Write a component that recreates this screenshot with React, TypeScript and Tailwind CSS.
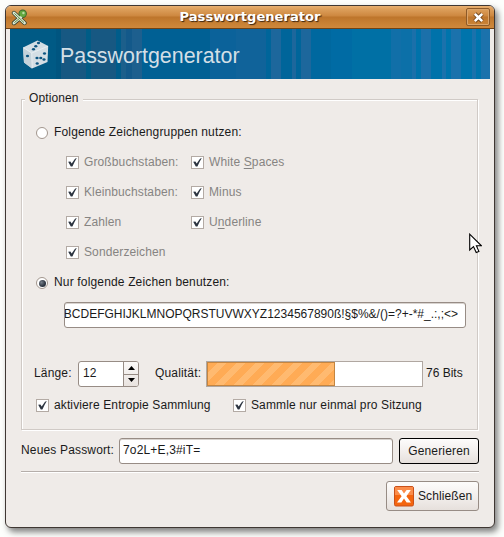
import React from "react";

const stripes: [number, number, string][] = [
  [0, 46, "#005a85"], [46, 5, "#005580"], [51, 25, "#175882"], [76, 5, "#005c86"], [81, 25, "#175882"],
  [106, 5, "#005c8a"], [111, 5, "#1c5f8b"], [116, 6, "#13598a"], [122, 10, "#1d5f8e"], [132, 68, "#006094"],
  [200, 26, "#0b629a"], [226, 30, "#10639a"], [256, 5, "#00659a"], [261, 10, "#1d679c"],
  [271, 11, "#00659a"], [282, 4, "#1d679c"], [286, 5, "#00659a"], [291, 10, "#1d679c"],
  [301, 20, "#00689f"], [321, 21, "#006ba4"], [342, 39, "#0070a5"], [381, 10, "#116fa8"],
  [391, 11, "#0c70a8"], [402, 4, "#1b70aa"], [406, 5, "#0072aa"], [411, 10, "#1b70aa"], [421, 11, "#0072aa"],
  [432, 4, "#1b72ac"], [436, 5, "#0074ac"], [441, 10, "#1b72ac"], [451, 11, "#0074ac"],
  [462, 4, "#1b72ac"], [466, 5, "#0074ac"], [471, 9, "#1b72ac"],
];

const pips: [number, number][] = [
  [16.5, 5], [13.8, 8.2], [11.5, 11.2],
  [5.5, 18],
  [15, 20], [22.5, 15.5], [18.8, 20], [15.2, 25.5], [22, 21.5],
];

function Check() {
  return (
    <span className="flex size-[13px] shrink-0 items-center justify-center border border-[#b3aaa4] bg-white">
      <svg width="11" height="11" viewBox="0 0 11 11">
        <path d="M1.2 4.8 L3.4 4.4 L4.7 6.4 L8 1.8 L9.8 1 L7.8 4.6 L5.4 9.4 L3.8 9.4 Z" fill="#2c3440" />
      </svg>
    </span>
  );
}

function Radio({ on = false }: { on?: boolean }) {
  return (
    <span className="flex size-3 shrink-0 items-center justify-center rounded-full border border-[#a2968e] bg-white">
      {on && <span className="size-[7px] rounded-full bg-[radial-gradient(circle_at_35%_35%,#77808b,#2c3440_60%)]" />}
    </span>
  );
}

function Option({ children, on = false, className = "" }: { children: React.ReactNode; on?: boolean; className?: string }) {
  return (
    <div className={`ml-[14px] flex h-3 items-center ${className}`}>
      <Radio on={on} />
      <span className="relative -top-px ml-1.5">{children}</span>
    </div>
  );
}

function Box({ children, enabled = false }: { children: React.ReactNode; enabled?: boolean }) {
  return (
    <div className={`flex h-[13px] items-center gap-[5px] tracking-[0.12px] ${enabled ? "" : "text-[#868482]"}`}>
      <Check />
      <span className="relative -top-px">{children}</span>
    </div>
  );
}

function Mnemonic({ children }: { children: string }) {
  return <span className="underline decoration-1 underline-offset-2">{children}</span>;
}

function TitleBar() {
  return (
    <div className="flex h-[23px] shrink-0 items-center border-b border-[#704214] bg-[linear-gradient(#e9b071_0,#dda05c_3px,#cd873f_10px,#bd752b_11px,#c98235_18px,#ce883c_22px)]">
      <svg className="ml-[5px]" width="17" height="17" viewBox="0 0 17 17">
        <path d="M3 4 L13.5 14 M10 8 L3 14" stroke="#3d4930" strokeWidth="4.4" strokeLinecap="round" />
        <circle cx="11.7" cy="4.7" r="4.2" fill="#3c642c" />
        <path d="M3 4 L13.5 14 M10 8 L3 14" stroke="#dfe8d8" strokeWidth="2.8" strokeLinecap="round" />
        <path d="M3.4 4.4 L13 13.6 M9 9 L3.4 13.6" stroke="#5e8f45" strokeWidth="1" />
        <circle cx="11.7" cy="4.7" r="3.2" fill="#62a83f" />
        <circle cx="12.4" cy="4" r="1.2" fill="#b9dca6" />
      </svg>
      <div className="flex-1 pl-[6px] text-center font-['DejaVu_Sans'] text-[13.1px] font-bold tracking-normal text-white [text-shadow:1px_1px_1px_#3b2410]">Passwortgenerator</div>
      <div className="mr-1 flex h-[18px] w-6 items-center justify-center rounded-[2px] border border-[#8d5a28] shadow-[inset_0_0_0_1px_#dba469]">
        <svg width="11" height="11" viewBox="0 0 11 11">
          <path d="M1.8 1.8 L9.2 9.2 M9.2 1.8 L1.8 9.2" stroke="#6e4319" strokeWidth="4.2" />
          <path d="M1.8 1.8 L9.2 9.2 M9.2 1.8 L1.8 9.2" stroke="#fff" strokeWidth="2.6" />
        </svg>
      </div>
    </div>
  );
}

function Banner() {
  return (
    <div className="relative mx-1 flex h-[50px] shrink-0 items-center overflow-hidden bg-[#006094]">
      <svg className="absolute inset-0" width="480" height="50" shapeRendering="crispEdges">
        {stripes.map(([x, w, c]) => <rect key={x} x={x} y="0" width={w} height="50" fill={c} />)}
      </svg>
      <svg className="relative ml-3" width="28" height="32" viewBox="0 0 28 32">
        <path d="M15.5 2.5 L26.2 8 L25.5 24 L10 30.5 L2 24.5 L1 9.5 Z" fill="#d3dee4" />
        <path d="M1 9.5 L9.5 15 L10 30.5 L2 24.5 Z" fill="#c3d2da" />
        <path d="M1.5 9.7 L9.7 15 L26 8.2 M9.7 15 L10.2 30" fill="none" stroke="#eef3f5" strokeWidth="0.7" />
        {pips.map(([x, y]) => <ellipse key={`${x}-${y}`} cx={x} cy={y} rx="1.6" ry="1.3" fill="#0d5580" />)}
      </svg>
      <span className="relative top-0.5 ml-[10px] text-[21.4px] tracking-normal text-[#d3dfe6]">Passwortgenerator</span>
    </div>
  );
}

function Spinner() {
  return (
    <div className="flex h-[26px] w-[61px] overflow-hidden rounded-[3px] border border-[#978c85] bg-white">
      <span className="w-11 pt-[3px] pl-1">12</span>
      <div className="flex flex-1 flex-col border-l border-[#978c85] bg-[linear-gradient(#fbf9f8,#e9e3df)]">
        <span className="flex flex-1 items-center justify-center border-b border-[#978c85]">
          <svg width="7" height="4" viewBox="0 0 7 4"><path d="M0 4 L3.5 0 L7 4 Z" fill="#000" /></svg>
        </span>
        <span className="flex flex-1 items-center justify-center">
          <svg width="7" height="4" viewBox="0 0 7 4"><path d="M0 0 L3.5 4 L7 0 Z" fill="#000" /></svg>
        </span>
      </div>
    </div>
  );
}

export default function App() {
  return (
    <div className="relative h-[537px] w-[504px] overflow-hidden bg-[#fdfefc] p-[5px] font-['Liberation_Sans',sans-serif] text-[12px] leading-4 tracking-[0.16px] whitespace-nowrap text-[#1a1a1a]">
      <div className="flex h-[523px] w-[490px] flex-col overflow-hidden rounded-[6px] border border-[#3f3733] bg-[#efebe8] shadow-[3px_4px_6px_#00000080]">
        <TitleBar />
        <Banner />
        <main className="px-[15px]">
          <section className="relative mt-5 h-[331px] w-[457px] border border-[#d0cac6] shadow-[1px_1px_0_#fff,inset_1px_1px_0_#fff]">
            <h2 className="absolute -top-[10px] left-[3px] bg-[#efebe8] px-1 tracking-[0.1px]">Optionen</h2>
            <Option className="mt-[27px]">Folgende Zeichengruppen nutzen:</Option>
            <div className="mt-[17px] ml-11 grid grid-cols-[125px_125px] gap-y-[17px]">
              <Box>Großbuchstaben:</Box>
              <Box>White <Mnemonic>S</Mnemonic>paces</Box>
              <Box>Kleinbuchstaben:</Box>
              <Box>Minus</Box>
              <Box>Zahlen</Box>
              <Box>U<Mnemonic>n</Mnemonic>derline</Box>
              <Box>Sonderzeichen</Box>
            </div>
            <Option on className="mt-[18px]">Nur folgende Zeichen benutzen:</Option>
            <div className="mt-[13px] ml-[42px] h-[26px] w-[402px] rounded-[3px] border border-[#978c85] bg-white pr-[7px] shadow-[inset_0_1px_0_#d8d3cf]">
              <div className="flex justify-end overflow-hidden pt-[3px] tracking-normal">
                <span>BCDEFGHIJKLMNOPQRSTUVWXYZ1234567890ß!§$%&amp;/()=?+-*#_.:,;&lt;&gt;</span>
              </div>
            </div>
            <div className="mt-[33px] ml-3 flex h-[26px] items-center">
              <span className="relative -top-px w-11">Länge:</span>
              <Spinner />
              <span className="relative -top-px ml-4 w-[51px]">Qualität:</span>
              <div className="h-[26px] w-[217px] border border-[#b0a7a1] bg-white">
                <div className="h-6 w-32 border border-[#c48540] bg-[repeating-linear-gradient(135deg,#ffab55_0_7px,#ffba70_7px_13.4px)]" />
              </div>
              <span className="relative -top-px ml-[3px] tracking-normal">76 Bits</span>
            </div>
            <div className="mt-3 ml-[14px] grid grid-cols-[197px_200px]">
              <Box enabled>aktiviere Entropie Sammlung</Box>
              <Box enabled>Sammle nur einmal pro Sitzung</Box>
            </div>
          </section>
          <div className="mt-2 flex h-[26px] w-[458px] items-center">
            <span className="relative -top-px w-[98px]">Neues Passwort:</span>
            <div className="h-[26px] w-[274px] rounded-[3px] border border-[#978c85] bg-white pt-[3px] pl-[3px] shadow-[inset_0_1px_0_#d8d3cf]">7o2L+E,3#iT=</div>
            <button className="ml-1.5 h-[26px] w-20 rounded-[3px] border border-black bg-[linear-gradient(#fdfcfb,#f3efed_50%,#e6e0dc)] tracking-[0.16px]">Generieren</button>
          </div>
          <div className="mt-[7px] h-0.5 w-[458px] border-t border-b border-t-[#b5aeaa] border-b-white" />
          <button className="mt-2 ml-[365px] flex h-[30px] w-[93px] items-center rounded-[3px] border border-[#978c85] bg-[linear-gradient(#fdfcfb,#f3efed_50%,#e6e0dc)] pl-[7px] tracking-[0.1px]">
            <svg width="20" height="21" viewBox="0 0 20 21">
              <rect x="0.5" y="0.5" width="19" height="19.5" rx="1.5" fill="#f4650f" stroke="#c9501a" />
              <rect x="1" y="1" width="18" height="8" fill="#fb8c4a" />
              <path d="M3.2 4 H7.6 L10 7.6 L12.6 4 H16.8 L12.4 10.2 L17 16.4 H12.6 L10 12.6 L7.4 16.4 H3 L7.6 10.2 Z" fill="#fff" />
            </svg>
            <span className="ml-1">Schließen</span>
          </button>
        </main>
      </div>
      <svg className="absolute top-[233px] left-[469px]" width="13" height="21" viewBox="0 0 13 21">
        <path d="M0.7 1.2 L0.7 17 L4.5 13.6 L7.2 19.6 L9.9 18.4 L7.4 12.7 L12.2 12.6 Z" fill="#fff" stroke="#000" strokeWidth="1.1" />
      </svg>
    </div>
  );
}
